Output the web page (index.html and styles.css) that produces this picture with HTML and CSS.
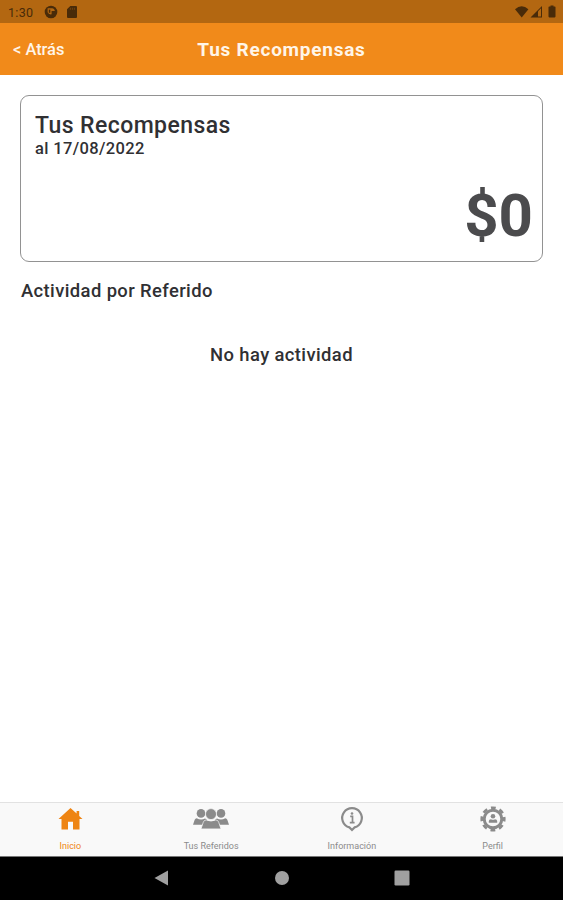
FILE: index.html
```
<!DOCTYPE html>
<html lang="es">
  <head>
    <meta charset="UTF-8" />
    <meta name="viewport" content="width=device-width, initial-scale=1.0" />
    <title>Tus Recompensas</title>
    <link rel="stylesheet" href="styles.css">
  </head>
  <body>
    <div class="status">
      <span class="time">1:30</span>
      <svg class="app-icon" width="14" height="14" viewBox="0 0 14 14">
        <circle cx="7" cy="7" r="6.3" fill="#492b09"/>
        <path d="M3.6 3.3h4.2a2.6 2.6 0 0 1 3 2.6H7.6v3.4a3.6 3.6 0 0 1-4-2z" fill="#b36711"/>
        <path d="M4.8 4.6h1.5v3.2H4.8z" fill="#492b09"/>
      </svg>
      <svg width="10" height="12" viewBox="0 0 10 12">
        <path d="M3.3 0H9a1 1 0 0 1 1 1v10a1 1 0 0 1-1 1H1a1 1 0 0 1-1-1V3.3z" fill="#492b09"/>
        <path d="M3.4 1.8v2M5.4 1.8v2M7.4 1.8v2" stroke="#7d490e" stroke-width=".8"/>
      </svg>
      <svg class="signals" width="44" height="14" viewBox="0 0 44 14">
        <path d="M0 4.2Q6.7-1.6 13.4 4.2L6.7 12.4z" fill="#492b09"/>
        <path d="M15.5 12.4L27 1v11.4z" fill="#492b09"/>
        <path d="M23 6.2l3-3v8.2h-3z" fill="#b36711"/>
        <path d="M35.5 1.4V.4h3v1h1.2q.8 0 .8.8v9.4q0 .8-.8.8h-5.4q-.8 0-.8-.8V2.2q0-.8.8-.8z" fill="#492b09"/>
      </svg>
    </div>
    <header>
      <a class="back">&lt; Atrás</a>
      <h1>Tus Recompensas</h1>
    </header>
    <main>
      <section class="card">
        <h2>Tus Recompensas</h2>
        <span class="date">al 17/08/2022</span>
        <div class="amount">$0</div>
      </section>
      <h3>Actividad por Referido</h3>
      <p class="empty">No hay actividad</p>
    </main>
    <nav class="tabs">
      <a class="tab active">
        <svg width="26" height="26" viewBox="0 0 26 26">
          <path d="M13.5 2L1.5 13h3v10.5H11v-7.7h5v7.7h6.5V13h3l-3.3-3V5h-2.6v2.6z" fill="currentColor"/>
        </svg>
        <span>Inicio</span>
      </a>
      <a class="tab">
        <svg width="38" height="26" viewBox="0 0 38 26" fill="currentColor">
          <circle cx="9" cy="7.4" r="4.3"/>
          <circle cx="29" cy="7.4" r="4.3"/>
          <path d="M1 18.8l1.7-5q.6-1.6 2-1.6 4.3 2.3 8.3.2l2 1.2-3.6 5.2z"/>
          <path d="M37 18.8l-1.7-5q-.6-1.6-2-1.6-4.3 2.3-8.3.2l-2 1.2 3.6 5.2z"/>
          <path d="M9 22.9l2.3-6.7q.7-2.2 3-2.3 4.7 2.4 9.4 0 2.3.1 3 2.3l2.3 6.7z" stroke="#f9f9f9" stroke-width=".7"/>
          <circle cx="19" cy="8.1" r="5.5" stroke="#f9f9f9" stroke-width=".7"/>
        </svg>
        <span>Tus Referidos</span>
      </a>
      <a class="tab">
        <svg width="26" height="26" viewBox="0 0 26 26">
          <path d="M10.5 21.4A9.8 9.8 0 1 1 15.5 21.4L13 24z" fill="none" stroke="currentColor" stroke-width="2.2"/>
          <path d="M11.2 10.4h2.3v6.1M10.8 16.6h4.8" fill="none" stroke="currentColor" stroke-width="1.7"/>
          <circle cx="13" cy="7.5" r="1.3" fill="currentColor"/>
        </svg>
        <span>Información</span>
      </a>
      <a class="tab">
        <svg width="26" height="26" viewBox="0 0 26 26">
          <circle cx="13" cy="13" r="8.8" fill="none" stroke="currentColor" stroke-width="3"/>
          <circle cx="13" cy="13" r="11.2" fill="none" stroke="currentColor" stroke-width="2.8" stroke-dasharray="4.8 3.996" stroke-dashoffset="2.4"/>
          <circle cx="13" cy="10.3" r="2.3" fill="currentColor"/>
          <path d="M8.8 16.8v-1.6q0-2 2.2-2 2 1.1 4 0 2.2 0 2.2 2v1.6z" fill="currentColor"/>
        </svg>
        <span>Perfil</span>
      </a>
    </nav>
    <div class="system">
      <svg width="16" height="16" viewBox="0 0 16 16"><path d="M.5 8L14 .5v15z"/></svg>
      <svg width="16" height="16" viewBox="0 0 16 16"><circle cx="8" cy="8" r="7"/></svg>
      <svg width="16" height="16" viewBox="0 0 16 16"><rect x=".5" y=".5" width="15" height="15" rx="1.2"/></svg>
    </div>
  </body>
</html>
```
FILE: styles.css
```
* {
    box-sizing: border-box;
}

body {
    margin: 0;
    height: 900px;
    display: flex;
    flex-direction: column;
    background: white;
    color: #303033;
    font-family: Roboto, sans-serif;
    overflow: hidden;
}

h1, h2, h3, p {
    margin: 0;
}

.status {
    height: 23px;
    padding: 1px 4px 0 8px;
    display: flex;
    align-items: center;
    background: #b36711;
    color: #492b09;
}

.time {
    width: 36px;
    font-size: 12.5px;
    letter-spacing: 0.3px;
}

.app-icon {
    margin-right: 9px;
}

.signals {
    margin-left: auto;
}

header {
    height: 52px;
    padding: 0 13px;
    display: grid;
    grid-template-columns: 1fr auto 1fr;
    align-items: center;
    background: #f18a1a;
    color: #fff5e8;
}

.back {
    font-size: 16.4px;
    font-weight: 500;
}

h1 {
    font-size: 19px;
    font-weight: 700;
    letter-spacing: 0.75px;
}

main {
    flex: 1;
    padding: 20px 20px 0;
}

.card {
    height: 167px;
    padding: 15px 10px 0 14px;
    border: 1px solid #929292;
    border-radius: 9px;
}

h2 {
    font-size: 23px;
    font-weight: 500;
    line-height: 29px;
    letter-spacing: 0.42px;
}

.date {
    display: block;
    font-size: 16.5px;
    font-weight: 500;
    line-height: 18px;
    letter-spacing: 0.35px;
}

.amount {
    margin: 28px -1px 0 0;
    color: #4b4b4d;
    font-size: 60px;
    font-weight: 700;
    line-height: 60px;
    text-align: right;
}

h3 {
    margin: 18px 0 0 1px;
    font-size: 18.4px;
    font-weight: 500;
    line-height: 22px;
    letter-spacing: 0.4px;
}

.empty {
    margin-top: 42px;
    font-size: 18.4px;
    font-weight: 500;
    line-height: 22px;
    letter-spacing: 0.4px;
    text-align: center;
}

.tabs {
    height: 54px;
    display: flex;
    border-top: 1px solid #e2e2e2;
    background: #f9f9f9;
}

.tab {
    flex: 1;
    padding-top: 3px;
    display: flex;
    flex-direction: column;
    align-items: center;
    color: #8b8b8b;
    font-size: 9px;
    font-weight: 400;
}

.tab span {
    margin-top: 8px;
    line-height: 12px;
}

.active {
    color: #ee8413;
}

.system {
    height: 44px;
    padding: 0 0 2px 153.5px;
    display: flex;
    align-items: center;
    gap: 104px;
    border-top: 1px solid #777;
    background: black;
    fill: #a0a0a0;
}
```
